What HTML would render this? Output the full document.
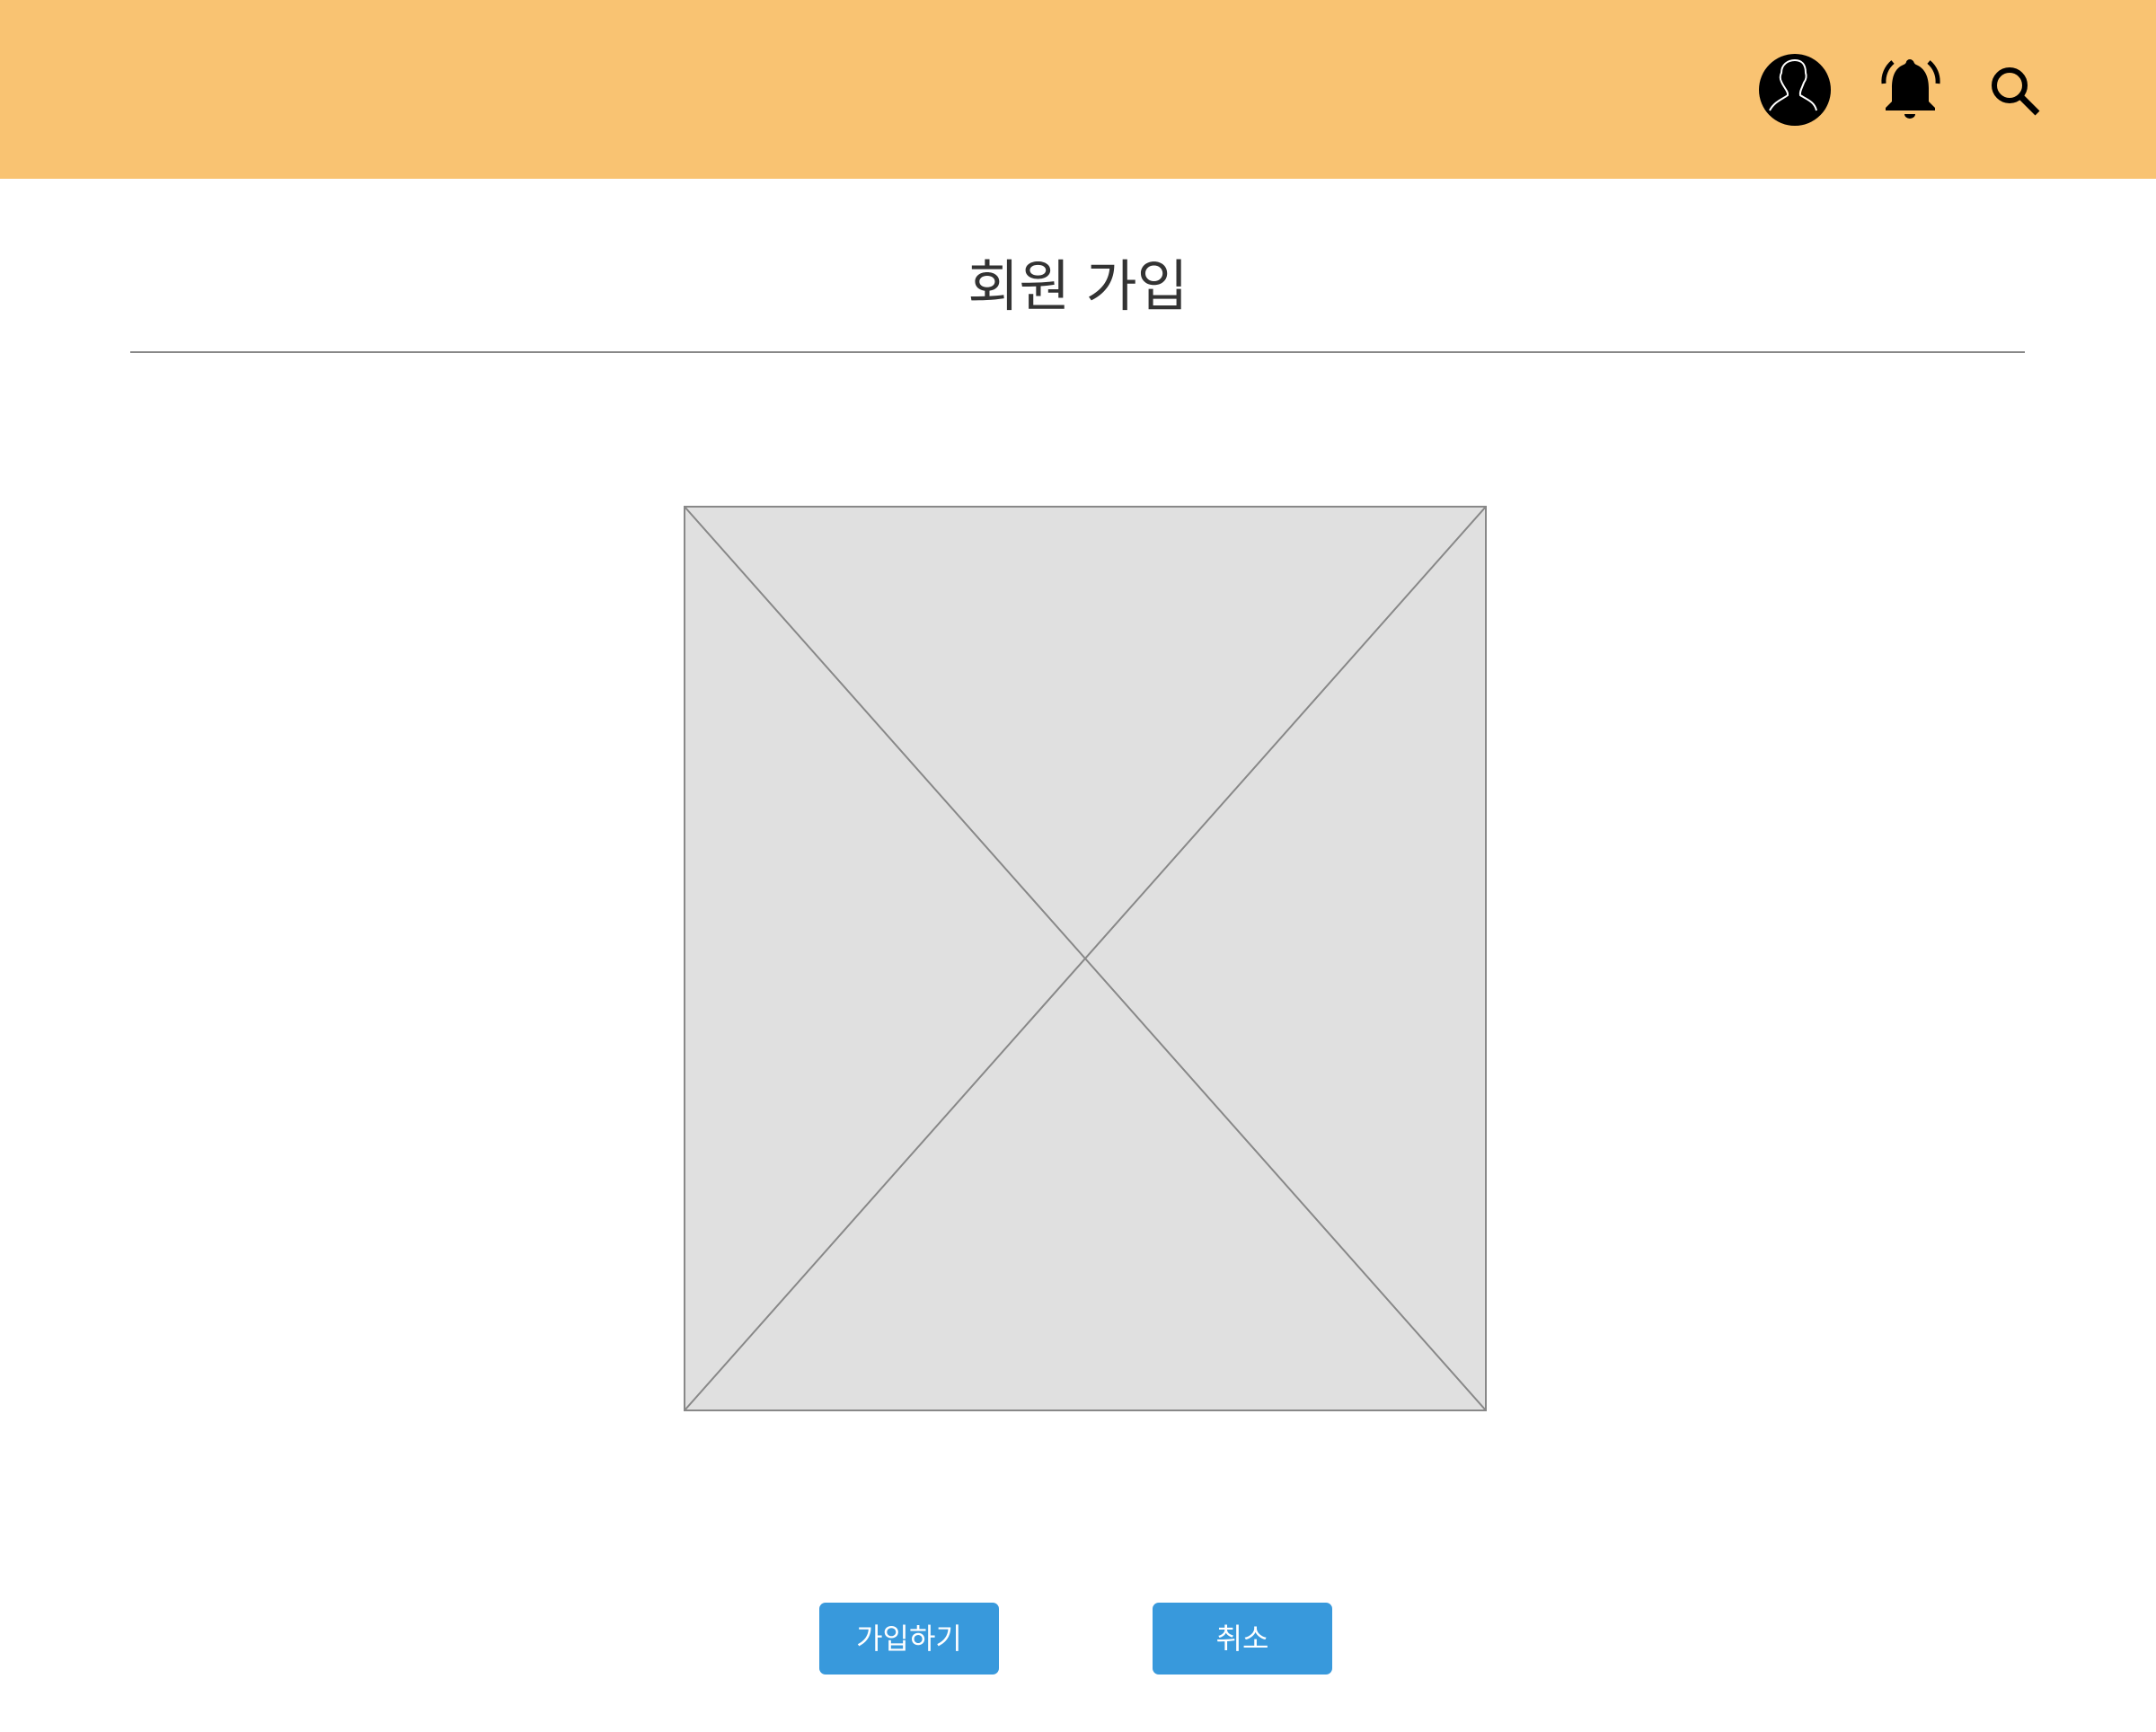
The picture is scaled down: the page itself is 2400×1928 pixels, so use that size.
<!DOCTYPE html>
<html><head><meta charset="utf-8"><style>
body{margin:0;width:2400px;height:1928px;background:#fff;position:relative;overflow:hidden;font-family:"Liberation Sans","Noto Sans CJK KR",sans-serif}
.hdr{position:absolute;left:0;top:0;width:2400px;height:199px;background:#f9c372}
.title{position:absolute;left:0;width:2400px;top:280px;text-align:center;font-size:62px;color:#333;line-height:80px}
.line{position:absolute;left:145px;top:391px;width:2109px;height:2px;background:#888}
.btn{position:absolute;top:1784px;width:200px;height:80px;background:#3899dc;border-radius:7px;color:#fff;font-size:32px;line-height:80px;text-align:center}
</style></head><body>
<div class="hdr"></div>
<svg style="position:absolute;left:0;top:0" width="2400" height="199">
<circle cx="1998" cy="100" r="40" fill="#000"/>
<path d="M1970 123 C1975 113 1985 110 1990 106 C1991 102 1986 98 1983 91 C1981 87 1982 83 1983 81 C1983 72 1990 67 1998 67 C2006 67 2010 72 2010 81 C2011 84 2011 88 2008 92 C2006 98 2003 102 2004 106 C2010 110 2020 113 2022 123" fill="none" stroke="#fff" stroke-width="2"/>
<path d="M2126 67 C2120 67 2124 70 2119 72 C2109 76 2106 86 2106 98 L2106 113 L2099 120 L2099 123 L2154 123 L2154 120 L2147 113 L2147 98 C2147 86 2143 76 2133 72 C2129 70 2132 67 2126 67Z" fill="#000"/>
<circle cx="2126" cy="70" r="4" fill="#000"/>
<path d="M2120 127 L2132 127 A6 5 0 0 1 2120 127Z" fill="#000"/>
<path d="M2107 69 A28 28 0 0 0 2097 93" fill="none" stroke="#000" stroke-width="5"/>
<path d="M2147 69 A28 28 0 0 1 2157 93" fill="none" stroke="#000" stroke-width="5"/>
<circle cx="2237" cy="95" r="17" fill="none" stroke="#000" stroke-width="6"/>
<path d="M2249 107 L2268 126" stroke="#000" stroke-width="7"/>
</svg>
<div class="title">회원 가입</div>
<div class="line"></div>
<svg style="position:absolute;left:761px;top:563px" width="894" height="1008">
<rect x="1" y="1" width="892" height="1006" fill="#e0e0e0" stroke="#888" stroke-width="2"/>
<path d="M1 1 L893 1007 M893 1 L1 1007" stroke="#888" stroke-width="2"/>
</svg>
<div class="btn" style="left:912px">가입하기</div>
<div class="btn" style="left:1283px">취소</div>
</body></html>
